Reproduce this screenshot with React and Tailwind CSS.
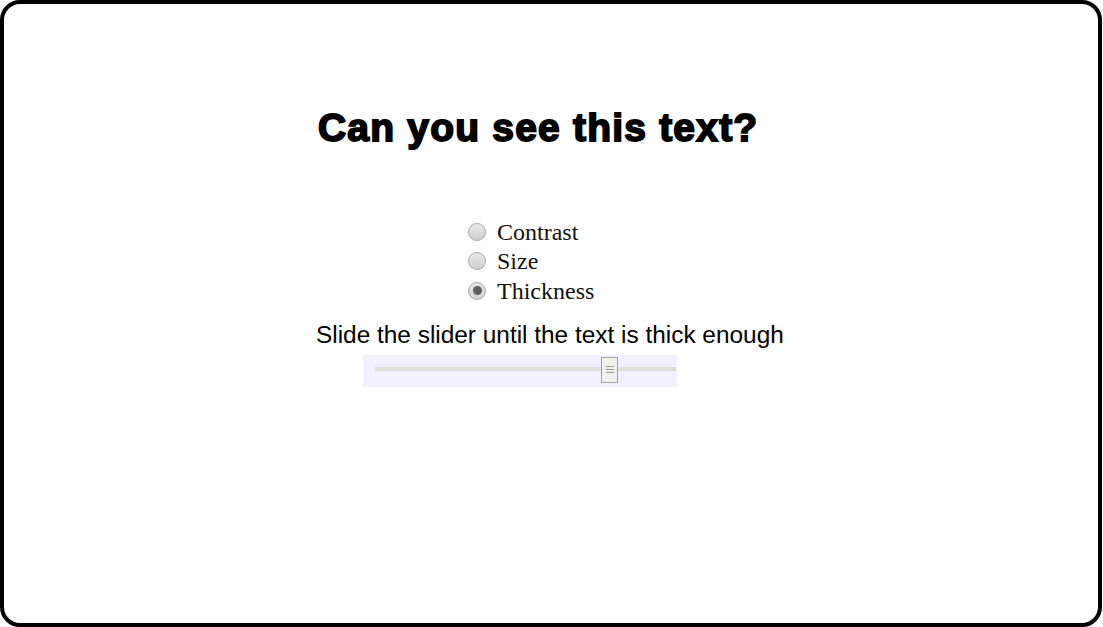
import React from "react";

function Radio({ checked, label }) {
  return (
    <div className="flex items-center h-[29.5px]">
      <div className="w-[18px] h-[18px] rounded-full border border-[#a9a9a9] bg-gradient-to-b from-[#e8e8e8] to-[#d0d0d0] flex items-center justify-center">
        {checked && <div className="w-[9px] h-[9px] rounded-full bg-[#5f5f5f]" />}
      </div>
      <span className="ml-[11px] text-[24px] text-[#111] leading-none">
        {label}
      </span>
    </div>
  );
}

export default function App() {
  return (
    <div className="w-[1102px] h-[627px] border-4 border-black rounded-[20px] bg-white overflow-hidden">
      <div className="flex flex-col">
        <h1
          className="mt-[100px] ml-[314px] text-[39px] font-bold leading-[48px] text-black tracking-[1.2px] [-webkit-text-stroke:1.8px_black]"
          style={{ fontFamily: '"Liberation Sans", Arial, sans-serif' }}
        >
          Can you see this text?
        </h1>
        <div
          className="mt-[65px] ml-[464px] flex flex-col"
          style={{ fontFamily: '"Liberation Serif", "Times New Roman", serif' }}
        >
          <Radio label="Contrast" />
          <Radio label="Size" />
          <Radio checked label="Thickness" />
        </div>
        <p
          className="mt-[14px] ml-[312px] text-[24.4px] leading-[30px] text-black"
          style={{ fontFamily: '"Liberation Sans", Arial, sans-serif' }}
        >
          Slide the slider until the text is thick enough
        </p>
        <div className="ml-[359px] mt-[5px] w-[314px] h-[32px] bg-[#f0f0ff] flex items-start pt-[12px] pl-[12px]">
          <div className="relative w-[301px] h-[4px] bg-[#e0ddd8]">
            <div className="absolute left-[226px] top-[-10px] w-[17px] h-[26px] bg-[#f2f0ec] border border-[#a3a3a3] flex flex-col items-center justify-center gap-[2px]">
              <div className="w-[8px] h-px bg-[#9a9a9a]" />
              <div className="w-[8px] h-px bg-[#9a9a9a]" />
              <div className="w-[8px] h-px bg-[#9a9a9a]" />
            </div>
          </div>
        </div>
      </div>
    </div>
  );
}
